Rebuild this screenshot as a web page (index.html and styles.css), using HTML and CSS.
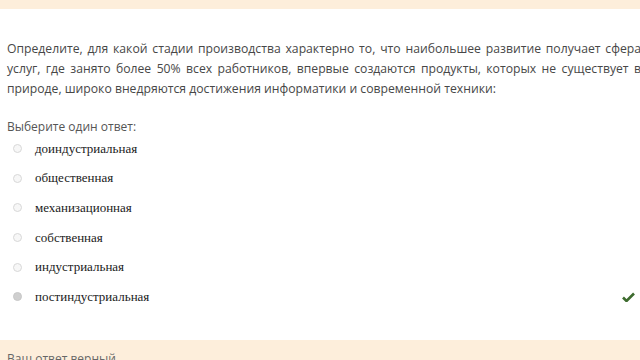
FILE: index.html
```html
<!DOCTYPE html>
<html lang="ru">
<head>
    <meta charset="UTF-8">
    <meta name="viewport" content="width=device-width, initial-scale=1.0">
    <title>Вопрос</title>
    <link rel="stylesheet" href="styles.css">
</head>
<body>
    <div class="topbar"></div>
    <div class="que">
        <p class="qtext">Определите, для какой стадии производства характерно то, что наибольшее развитие получает сфера услуг, где занято более 50% всех работников, впервые создаются продукты, которых не существует в природе, широко внедряются достижения информатики и современной техники:</p>
        <div class="prompt">Выберите один ответ:</div>
        <div class="answer">
            <div class="option"><span class="radio"></span><span class="label">доиндустриальная</span></div>
            <div class="option"><span class="radio"></span><span class="label">общественная</span></div>
            <div class="option"><span class="radio"></span><span class="label">механизационная</span></div>
            <div class="option"><span class="radio"></span><span class="label">собственная</span></div>
            <div class="option"><span class="radio"></span><span class="label">индустриальная</span></div>
            <div class="option correct">
                <span class="radio checked"></span><span class="label">постиндустриальная</span>
                <svg class="tick" width="13" height="10" viewBox="0 0 13 10"><path d="M1 5.5 L4.5 9 L12 1.5" fill="none" stroke="#3d6b2e" stroke-width="2.6"/></svg>
            </div>
        </div>
    </div>
    <div class="feedback">Ваш ответ верный.</div>
</body>
</html>
```

FILE: styles.css
```css
body {
    margin: 0;
    background: #fff;
    overflow: hidden;
    width: 640px;
    height: 360px;
    font-family: "Open Sans", sans-serif;
}
.topbar {
    height: 9px;
    background-color: #fdeedb;
}
.que {
    padding: 30px 0 0 7px;
    height: 331px;
    box-sizing: border-box;
}
.qtext {
    margin: 0;
    width: 634px;
    font-size: 12.2px;
    line-height: 20px;
    color: #474747;
    text-align: justify;
}
.prompt {
    margin-top: 18px;
    font-size: 12px;
    line-height: 20px;
    color: #555;
}
.answer {
    margin-top: -3px;
    width: 628px;
}
.option {
    display: flex;
    align-items: center;
    height: 29.6px;
}
.radio {
    width: 9px;
    height: 9px;
    margin-left: 6px;
    border: 1px solid #d8d8d8;
    border-radius: 50%;
    background: #f7f7f7;
    box-sizing: border-box;
}
.radio.checked {
    background: #cfcfcf;
    border-color: #c8c8c8;
}
.label {
    margin-left: 13px;
    font-family: "Liberation Serif", serif;
    font-size: 13px;
    color: #1a1a1a;
}
.tick {
    margin-left: auto;
}
.feedback {
    background-color: #fdeedb;
    height: 20px;
    padding: 10px 0 0 7px;
    box-sizing: border-box;
    overflow: hidden;
    font-size: 12px;
    color: #666;
}
```
